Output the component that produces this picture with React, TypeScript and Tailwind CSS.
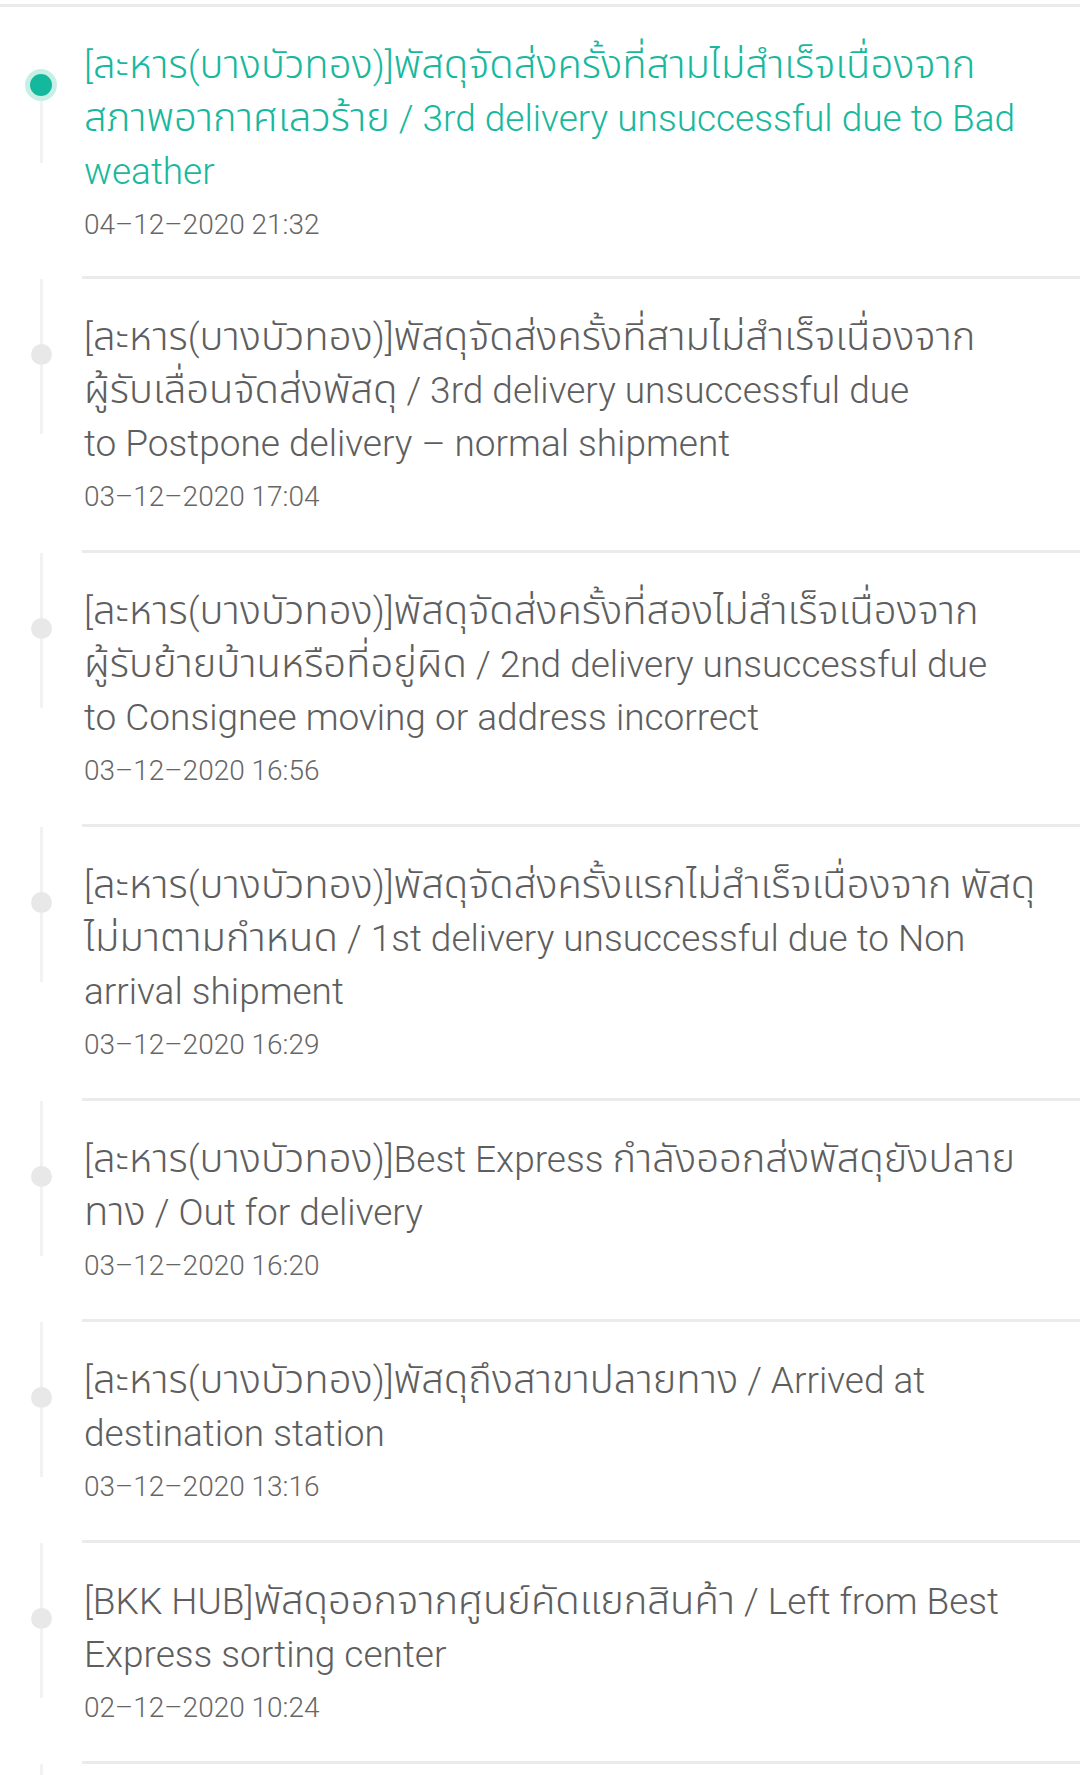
import React from "react";

type Track = {
  lines: string[];
  time: string;
};

const tracks: Track[] = [
  {
    lines: [
      "[ละหาร(บางบัวทอง)]พัสดุจัดส่งครั้งที่สามไม่สำเร็จเนื่องจาก",
      "สภาพอากาศเลวร้าย / 3rd delivery unsuccessful due to Bad",
      "weather",
    ],
    time: "04–12–2020 21:32",
  },
  {
    lines: [
      "[ละหาร(บางบัวทอง)]พัสดุจัดส่งครั้งที่สามไม่สำเร็จเนื่องจาก",
      "ผู้รับเลื่อนจัดส่งพัสดุ / 3rd delivery unsuccessful due",
      "to Postpone delivery – normal shipment",
    ],
    time: "03–12–2020 17:04",
  },
  {
    lines: [
      "[ละหาร(บางบัวทอง)]พัสดุจัดส่งครั้งที่สองไม่สำเร็จเนื่องจาก",
      "ผู้รับย้ายบ้านหรือที่อยู่ผิด / 2nd delivery unsuccessful due",
      "to Consignee moving or address incorrect",
    ],
    time: "03–12–2020 16:56",
  },
  {
    lines: [
      "[ละหาร(บางบัวทอง)]พัสดุจัดส่งครั้งแรกไม่สำเร็จเนื่องจาก พัสดุ",
      "ไม่มาตามกำหนด / 1st delivery unsuccessful due to Non",
      "arrival shipment",
    ],
    time: "03–12–2020 16:29",
  },
  {
    lines: [
      "[ละหาร(บางบัวทอง)]Best Express กำลังออกส่งพัสดุยังปลาย",
      "ทาง / Out for delivery",
    ],
    time: "03–12–2020 16:20",
  },
  {
    lines: [
      "[ละหาร(บางบัวทอง)]พัสดุถึงสาขาปลายทาง / Arrived at",
      "destination station",
    ],
    time: "03–12–2020 13:16",
  },
  {
    lines: [
      "[BKK HUB]พัสดุออกจากศูนย์คัดแยกสินค้า / Left from Best",
      "Express sorting center",
    ],
    time: "02–12–2020 10:24",
  },
];

// thai runs get a bigger size so they sit like the looped android font
const MixedLine: React.FC<{ text: string }> = ({ text }) => {
  const parts = text.split(/([\u0E00-\u0E7F]+)/);
  return (
    <>
      {parts.map((part, i) =>
        /[\u0E00-\u0E7F]/.test(part) ? (
          <span key={i} className="text-[40px] leading-[40px]">
            {part}
          </span>
        ) : (
          <React.Fragment key={i}>{part}</React.Fragment>
        )
      )}
    </>
  );
};

const TimelineMark: React.FC<{ first: boolean }> = ({ first }) => {
  if (first) {
    return (
      <div className="flex w-[82px] shrink-0 flex-col items-center">
        <div className="h-[62px]" />
        <div className="h-[32px] w-[32px] rounded-full border-[5px] border-[#c8efe6] bg-[#14b89c]" />
        <div className="h-[62px] w-[3px] bg-[#f2f2f2]" />
      </div>
    );
  }
  return (
    <div className="flex w-[82px] shrink-0 flex-col items-center">
      <div className="h-[65px] w-[3px] bg-[#f2f2f2]" />
      <div className="h-[21px] w-[21px] rounded-full bg-[#e8e8e8]" />
      <div className="h-[69px] w-[3px] bg-[#f2f2f2]" />
    </div>
  );
};

const TrackRow: React.FC<{ track: Track; first: boolean }> = ({
  track,
  first,
}) => {
  return (
    <li className="flex">
      <TimelineMark first={first} />
      <div
        className={`flex-1 border-b-[3px] border-[#ebebeb] pl-[2px] pr-[12px] pt-[32px] ${
          first ? "pb-[30px]" : "pb-[32px]"
        }`}
      >
        <p
          className={`text-[37px] leading-[53px] font-light ${
            first ? "text-[#17b89d]" : "text-[#5e5e5e]"
          }`}
        >
          {track.lines.map((line, i) => (
            <React.Fragment key={i}>
              {i > 0 && <br />}
              <MixedLine text={line} />
            </React.Fragment>
          ))}
        </p>
        <p className="mt-[6px] text-[28px] leading-[42px] font-light text-[#666666]">
          {track.time}
        </p>
      </div>
    </li>
  );
};

export default function App() {
  return (
    <div
      className="h-[1775px] w-full overflow-hidden bg-white"
      style={{
        fontFamily:
          'Roboto, "Noto Sans Thai", "Noto Sans Thai UI", "Noto Sans", sans-serif',
      }}
    >
      <div className="mt-[4px] h-[3px] w-full bg-[#ebebeb]" />
      <ul className="flex flex-col">
        {tracks.map((track, i) => (
          <TrackRow key={i} track={track} first={i === 0} />
        ))}
      </ul>
      {/* start of the next, off-screen entry */}
      <div className="flex w-[82px] justify-center">
        <div className="h-[40px] w-[3px] bg-[#f2f2f2]" />
      </div>
    </div>
  );
}
